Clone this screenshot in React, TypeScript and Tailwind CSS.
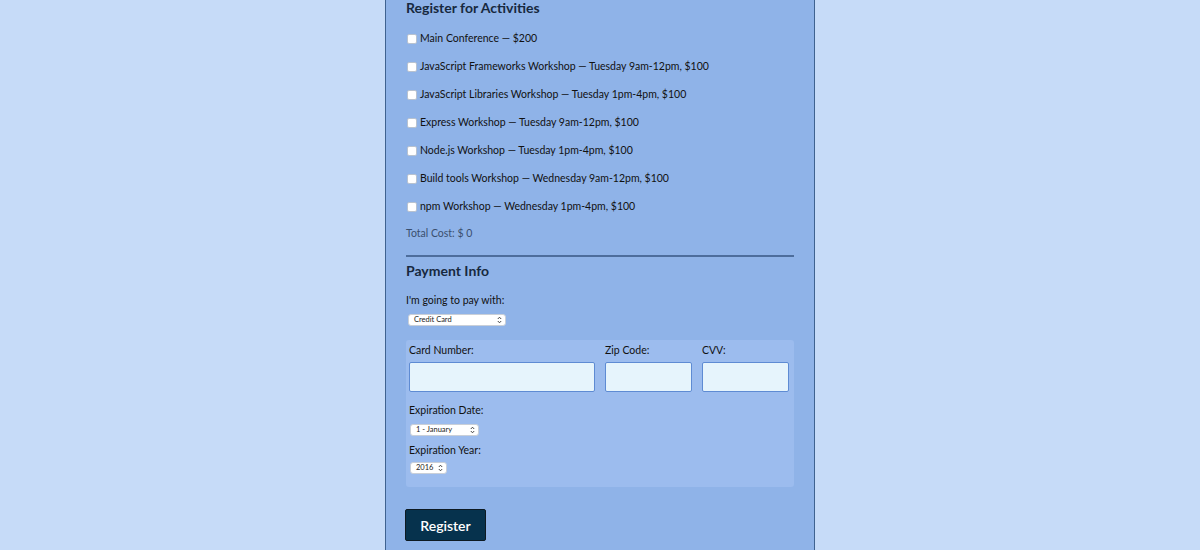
import React from "react";

const activities = [
  "Main Conference — $200",
  "JavaScript Frameworks Workshop — Tuesday 9am-12pm, $100",
  "JavaScript Libraries Workshop — Tuesday 1pm-4pm, $100",
  "Express Workshop — Tuesday 9am-12pm, $100",
  "Node.js Workshop — Tuesday 1pm-4pm, $100",
  "Build tools Workshop — Wednesday 9am-12pm, $100",
  "npm Workshop — Wednesday 1pm-4pm, $100",
];

function FakeSelect({ label, width }: { label: string; width: string }) {
  return (
    <div
      className={`flex h-[12px] items-center justify-between rounded-[3px] border border-[#c9cfd8] bg-white pl-[5px] pr-[3px] ${width}`}
    >
      <span className="text-[7.5px] leading-none text-[#222]">{label}</span>
      <svg width="5" height="8" viewBox="0 0 5 8" fill="none">
        <path d="M0.8 3 L2.5 1.2 L4.2 3" stroke="#333" strokeWidth="0.9" />
        <path d="M0.8 5 L2.5 6.8 L4.2 5" stroke="#333" strokeWidth="0.9" />
      </svg>
    </div>
  );
}

export default function App() {
  return (
    <div
      className="flex h-[550px] w-full justify-center overflow-hidden bg-[#c6dbf8]"
      style={{ fontFamily: "Lato, 'Open Sans', sans-serif" }}
    >
      <div className="w-[430px] border-x border-[#3f6290] bg-[#8fb3e8] pl-[20px] pr-[20px]">
        <h2 className="h-[16px] text-[14px] font-bold leading-[16px] text-[#17293f]">
          Register for Activities
        </h2>
        <div className="mt-[9px]">
          {activities.map((a) => (
            <div key={a} className="flex h-[28px] items-center">
              <span className="ml-[1px] mr-[3px] h-[10px] w-[10px] rounded-[2px] border border-[#b8c2cf] bg-white" />
              <span className="text-[10.5px] text-[#111]">{a}</span>
            </div>
          ))}
          <div className="flex h-[26px] items-center text-[10.5px] text-[#3a4f6e]">
            Total Cost: $ 0
          </div>
        </div>
        <div className="mt-[8px] h-[2px] bg-[#4d6d9c]" />
        <h2 className="mt-[6px] h-[16px] text-[14px] font-bold leading-[16px] text-[#17293f]">
          Payment Info
        </h2>
        <div className="mt-[14px] h-[14px] text-[10.5px] leading-[14px] text-[#111]">
          I'm going to pay with:
        </div>
        <div className="mt-[7px] pl-[2px]">
          <FakeSelect label="Credit Card" width="w-[98px]" />
        </div>
        <div className="mt-[14px] h-[147px] rounded-[3px] bg-[#9cbcee] pl-[3px] pr-[4px] pt-[3px]">
          <div className="flex gap-[10px]">
            <div className="w-[186px]">
              <div className="h-[14px] text-[10.5px] leading-[14px] text-[#111]">Card Number:</div>
              <div className="mt-[5px] h-[30px] rounded-[2px] border-[1.5px] border-[#5e8bd3] bg-[#e6f4fc]" />
            </div>
            <div className="w-[87px]">
              <div className="h-[14px] text-[10.5px] leading-[14px] text-[#111]">Zip Code:</div>
              <div className="mt-[5px] h-[30px] rounded-[2px] border-[1.5px] border-[#5e8bd3] bg-[#e6f4fc]" />
            </div>
            <div className="w-[87px]">
              <div className="h-[14px] text-[10.5px] leading-[14px] text-[#111]">CVV:</div>
              <div className="mt-[5px] h-[30px] rounded-[2px] border-[1.5px] border-[#5e8bd3] bg-[#e6f4fc]" />
            </div>
          </div>
          <div className="mt-[11px] h-[14px] text-[10.5px] leading-[14px] text-[#111]">Expiration Date:</div>
          <div className="mt-[7px] pl-[1px]">
            <FakeSelect label="1 - January" width="w-[69px]" />
          </div>
          <div className="mt-[7px] h-[14px] text-[10.5px] leading-[14px] text-[#111]">Expiration Year:</div>
          <div className="mt-[5px] pl-[1px]">
            <FakeSelect label="2016" width="w-[37px]" />
          </div>
        </div>
        <button className="mt-[22px] h-[32px] w-[81px] -ml-[1px] rounded-[2px] border border-[#0d1a22] bg-[#06324d] text-[14px] font-semibold text-white">
          Register
        </button>
      </div>
    </div>
  );
}
